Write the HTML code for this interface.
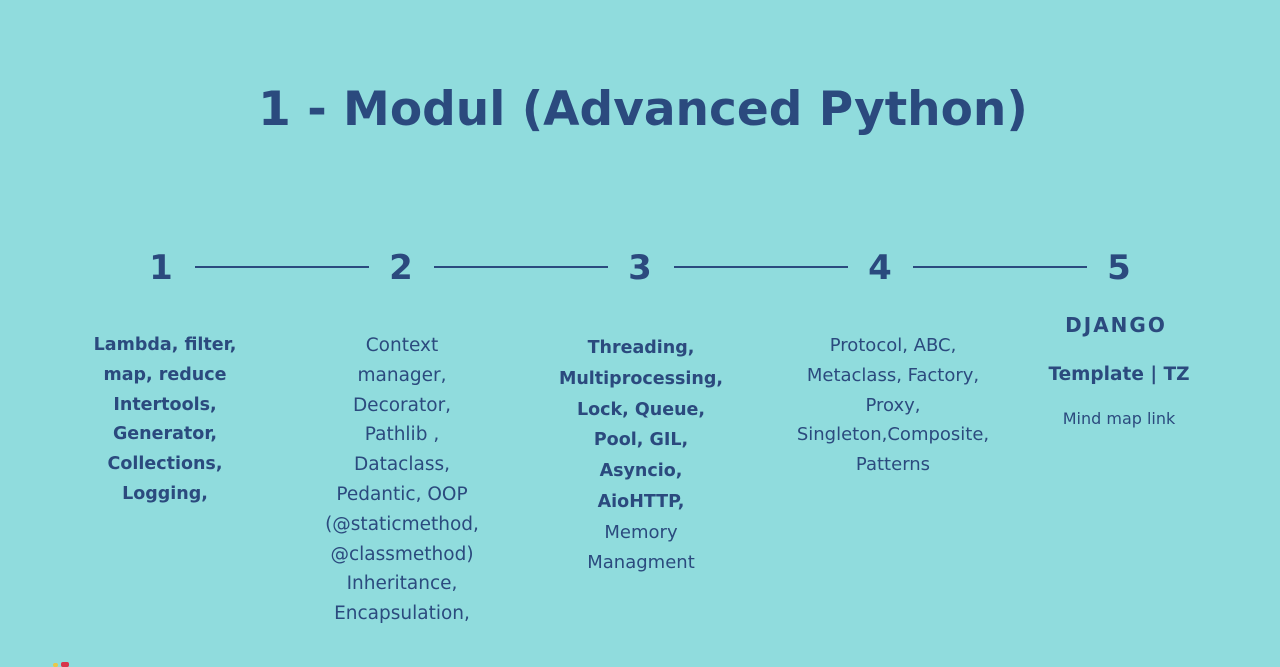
<!DOCTYPE html>
<html><head><meta charset="utf-8"><style>
html,body{margin:0;padding:0;}
body{width:1280px;height:667px;background:#90dcdd;position:relative;overflow:hidden;font-family:"DejaVu Sans","Liberation Sans",sans-serif;color:#2b4a7e;}
.t{position:absolute;left:0;width:1286px;top:82px;text-align:center;font-size:47px;font-weight:bold;}
.n{position:absolute;top:248px;font-size:34px;font-weight:bold;width:60px;text-align:center;}
.l{position:absolute;top:266px;height:2px;background:#2b4a7e;}
.c{position:absolute;width:260px;text-align:center;font-size:18px;line-height:29.8px;}
.b{font-weight:bold;font-size:17.5px;}
</style></head><body>
<div class="t">1 - Modul (Advanced Python)</div>
<div class="n" style="left:131px">1</div>
<div class="n" style="left:371px">2</div>
<div class="n" style="left:610px">3</div>
<div class="n" style="left:850px">4</div>
<div class="n" style="left:1089px">5</div>
<div class="l" style="left:195px;width:174px"></div>
<div class="l" style="left:434px;width:174px"></div>
<div class="l" style="left:674px;width:174px"></div>
<div class="l" style="left:913px;width:174px"></div>
<div class="c b" style="left:35px;top:331px">Lambda, filter,<br>map, reduce<br>Intertools,<br>Generator,<br>Collections,<br>Logging,</div>
<div class="c" style="left:272px;top:331px;font-size:18.5px">Context<br>manager,<br>Decorator,<br>Pathlib ,<br>Dataclass,<br>Pedantic, OOP<br>(@staticmethod,<br>@classmethod)<br>Inheritance,<br>Encapsulation,</div>
<div class="c" style="left:511px;top:333px"><span class="b">Threading,<br>Multiprocessing,<br>Lock, Queue,<br>Pool, GIL,<br>Asyncio,<br>AioHTTP,</span><br>Memory<br>Managment</div>
<div class="c" style="left:763px;top:331px">Protocol, ABC,<br>Metaclass, Factory,<br>Proxy,<br>Singleton,Composite,<br>Patterns</div>
<div class="c b" style="left:986px;top:311px;font-size:20px;letter-spacing:2px">DJANGO</div>
<div class="c b" style="left:989px;top:360px;font-size:18.5px">Template | TZ</div>
<div class="c" style="left:989px;top:404px;font-size:16px">Mind map link</div>
<div style="position:absolute;left:53px;top:663px;width:5px;height:4px;background:#e8c84a;border-radius:2px"></div>
<div style="position:absolute;left:61px;top:662px;width:8px;height:5px;background:#d8344a;border-radius:2px"></div>
</body></html>
